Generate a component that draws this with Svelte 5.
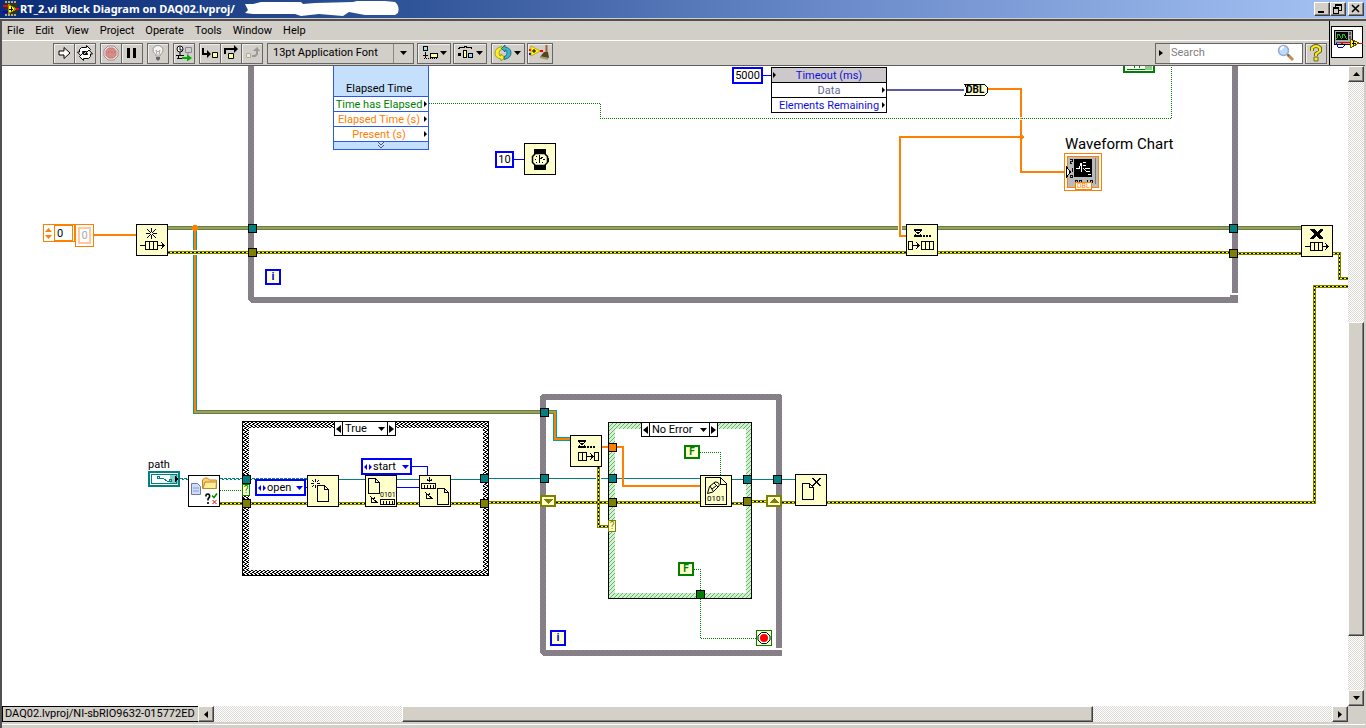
<script lang="ts">
  type Item = { x: number; y: number; kind: string };

  const menus = ['File', 'Edit', 'View', 'Project', 'Operate', 'Tools', 'Window', 'Help'];

  let search = $state('');
  let font = $state('13pt Application Font');
  let fileOperation = $state('open');
  let seekFrom = $state('start');
  let pathCase = $state('True');
  let errorCase = $state('No Error');

  // wires on the diagram
  const queueWires = [
    'M168 228H1301',
    'M195 228V412H544H555V439H570'
  ];
  const orangeWires = [
    'M988 89H1021V172H1066',
    'M1021 137H900V236H906',
    'M94 235H136',
    'M602 447H623V486H700'
  ];
  const errorWires = [
    'M168 252.5H1233V253.5H1339.5V278.5H1350',
    'M220 503.5H484V502.5H544',
    'M556 502.5H700M732 503.5H747V501.5H766M782 502.5H1314.5V286.5H1350',
    'M598.5 467V526.5H608'
  ];
  const boolWires = [
    'M429 103.5H600.5V118.5H1171.5V66',
    'M220 490.5H243',
    'M700 452.5H720.5V475',
    'M694 569.5H700.5V638.5H757'
  ];

  const tunnels = [
    { x: 248, y: 224, color: '#008080' },
    { x: 248, y: 248, color: '#808000' },
    { x: 1229, y: 224, color: '#008080' },
    { x: 1229, y: 249, color: '#808000' },
    { x: 242, y: 475, color: '#008080' },
    { x: 242, y: 499, color: '#808000' },
    { x: 480, y: 474, color: '#008080' },
    { x: 480, y: 499, color: '#808000' },
    { x: 540, y: 408, color: '#008080' },
    { x: 540, y: 474, color: '#008080' },
    { x: 608, y: 443, color: '#ff8000' },
    { x: 608, y: 474, color: '#008080' },
    { x: 608, y: 498, color: '#808000' },
    { x: 743, y: 475, color: '#008080' },
    { x: 743, y: 497, color: '#808000' },
    { x: 773, y: 475, color: '#008080' },
    { x: 696, y: 590, color: '#008000' }
  ];

  const nodes: Item[] = [
    { x: 136, y: 224, kind: 'obtain' },
    { x: 906, y: 224, kind: 'enqueue' },
    { x: 1301, y: 225, kind: 'release' },
    { x: 570, y: 435, kind: 'dequeue' },
    { x: 524, y: 143, kind: 'wait' },
    { x: 188, y: 475, kind: 'check' },
    { x: 307, y: 475, kind: 'open' },
    { x: 365, y: 475, kind: 'size' },
    { x: 419, y: 475, kind: 'position' },
    { x: 700, y: 475, kind: 'write' },
    { x: 795, y: 474, kind: 'close' }
  ];

  const vScroll = { start: 39.5, size: 51.6 };
  const hScroll = { start: 16.8, size: 61.8 };

  function at(x: number, y: number) {
    return `left: ${x}px; top: ${y}px`;
  }
</script>

{#snippet caret()}
  <svg class="caret" viewBox="0 0 7 4" width="7" height="4"><path d="M0 0h7L3.5 4z" /></svg>
{/snippet}

{#snippet page(x: number, y: number)}
  <path d="M{x} {y}h7l4 4v12h-11zM{x + 7} {y}v4h4" fill="#ffc" stroke="#000" />
{/snippet}

<div class="window">
  <header class="titlebar">
    <svg class="app-icon" viewBox="0 0 16 16" width="16" height="16" shape-rendering="crispEdges">
      <path d="M2 1h12v14H2z" fill="#332" />
      <path d="M2 1h12M2 14h12" stroke="#aa9" stroke-width="2" stroke-dasharray="2 1" />
      <path d="M0 5h5M12 8h4" stroke="#f00" stroke-width="2" />
      <path d="M0 11h5" stroke="#00f" stroke-width="2" />
      <path d="M5 3v10l8-5z" fill="#ff0" stroke="#980" />
      <path d="M6 8h4M8 6v4" stroke="#000" />
    </svg>
    <h1>RT_2.vi Block Diagram on DAQ02.lvproj/</h1>
    <svg class="scribble" viewBox="0 0 155 16" width="155" height="16">
      <path d="M0 3L8 3 16 1 56 1 58 3 70 2 108 1 112 0 140 0 150 1Q155 5 153 12L150 14 120 14 104 11 98 15 74 13 56 15 50 13 8 13 0 12 3 9z" fill="#fff" />
    </svg>
    <div class="window-buttons">
      <button type="button" aria-label="Minimize"><svg viewBox="0 0 12 10" width="12" height="10"><path d="M2 8h6" stroke="#000" stroke-width="2" /></svg></button>
      <button type="button" aria-label="Restore"><svg viewBox="0 0 12 10" width="12" height="10" shape-rendering="crispEdges"><path d="M3 1h7M1 4h6" stroke="#000" stroke-width="2" /><path d="M3.5 2v2M9.5 1v5.5H7M1.5 4v5.500h5V4" fill="none" stroke="#000" /></svg></button>
      <button type="button" class="close" aria-label="Close"><svg viewBox="0 0 12 10" width="12" height="10"><path d="M2 1l7 7M9 1L2 8" stroke="#000" stroke-width="1.6" /></svg></button>
    </div>
  </header>

  <div class="frame">
    <div class="top">
      <div class="bars">
        <nav class="menubar">
          {#each menus as menu}
            <button type="button">{menu}</button>
          {/each}
        </nav>

        <div class="toolbar">
          <div class="group">
            <button type="button" aria-label="Run">
              <svg viewBox="0 0 16 16" width="16" height="16"><path d="M3 6h5V2.500l6 5.500-6 5.500V10H3z" fill="#fff" stroke="#000" /></svg>
            </button>
            <button type="button" aria-label="Run Continuously">
              <svg viewBox="0 0 16 16" width="16" height="16"><path d="M2.500 7V4.500l2-2h5V.5l4 4-4 4v-2h-4v1h2l-3.500 3.500L.5 7z" fill="#fff" stroke="#000" /><path d="M13.500 9v2.500l-2 2h-5v2l-4-4 4-4v2h4v-1h-2L12 5l3.500 4z" fill="#fff" stroke="#000" /></svg>
            </button>
          </div>
          <div class="group">
            <button type="button" aria-label="Abort Execution">
              <svg viewBox="0 0 16 16" width="16" height="16"><path d="M5 1h6l4 4v6l-4 4H5l-4-4V5z" fill="#eee" stroke="#a88" /><path d="M5.500 3h5L13 5.500v5L10.500 13h-5L3 10.500v-5z" fill="#d88c88" stroke="#b77" /><path d="M5 7h7" stroke="#c66" stroke-dasharray="2 1" /></svg>
            </button>
            <button type="button" aria-label="Pause">
              <svg viewBox="0 0 16 16" width="16" height="16" shape-rendering="crispEdges"><path d="M3 3h3v10H3zM9 3h3v10H9z" /></svg>
            </button>
          </div>
          <div class="group">
            <button type="button" aria-label="Highlight Execution">
              <svg viewBox="0 0 16 16" width="16" height="16"><path d="M6 11C6 9 3 8 3 5a5 4.500 0 0 1 10 0c0 3-3 4-3 6z" fill="#f4f4f0" stroke="#999" /><path d="M7 10L6 5l2 2 2-2-1 5" fill="none" stroke="#aaa" /><path d="M6 12h4v2L8 16l-2-2z" fill="#666" /></svg>
            </button>
          </div>
          <div class="group">
            <button type="button" aria-label="Retain Wire Values">
              <svg viewBox="0 0 16 16" width="16" height="16"><circle cx="4" cy="4" r="3" fill="#fff" stroke="#000" /><path d="M4 2v3h2M4 7v3M0 10.500h8M1 13.500h5M2.500 11v2" fill="none" stroke="#000" /><path d="M9.500 2.500h6v5h-6z" fill="none" stroke="#889" /><path d="M12 8v3" stroke="#889" /><path d="M6 13h6" stroke="#0a0" stroke-width="2" /><path d="M11 9.500l5 3.500-5 3.500z" fill="#0a0" /></svg>
            </button>
          </div>
          <div class="group">
            <button type="button" aria-label="Step Into">
              <svg viewBox="0 0 16 16" width="16" height="16"><path d="M1 3v6h4" fill="none" stroke="#000" stroke-width="2" /><path d="M5 5l4 4-4 4z" /><path d="M10.500 7.500h5v5h-5z" fill="#ff9" stroke="#000" /></svg>
            </button>
            <button type="button" aria-label="Step Over">
              <svg viewBox="0 0 16 16" width="16" height="16"><path d="M2 9V4h10" fill="none" stroke="#000" stroke-width="2" /><path d="M11 0l4 4-4 4z" /><path d="M5.500 8.500h5v5h-5z" fill="#ff9" stroke="#000" /></svg>
            </button>
            <button type="button" aria-label="Step Out" disabled>
              <svg viewBox="0 0 16 16" width="16" height="16"><path d="M8 11h3l2-2V6" fill="none" stroke="#999" stroke-width="2" /><path d="M9 6l4-4 3 4z" fill="#999" /><path d="M2.500 8.500h4v4h-4z" fill="#eec" stroke="#aaa" /></svg>
            </button>
          </div>
          <label class="font-ring">
            <select bind:value={font} aria-label="Text Settings">
              <option>13pt Application Font</option>
            </select>
            <span>{@render caret()}</span>
          </label>
          <div class="group wide">
            <button type="button" aria-label="Align Objects">
              <svg viewBox="0 0 18 16" width="18" height="16" shape-rendering="crispEdges"><path d="M3.500 1.500h4v4h-4z" fill="#9df" stroke="#000" /><path d="M5.500 7v6M3 10.500h5" stroke="#000" /><path d="M10.500 8.500h7v4h-7z" fill="#ff9" stroke="#000" /><path d="M4 13.500h13" stroke="#000" stroke-dasharray="1 1" /></svg>
              {@render caret()}
            </button>
            <button type="button" aria-label="Distribute Objects">
              <svg viewBox="0 0 18 16" width="18" height="16" shape-rendering="crispEdges"><path d="M2 3.500h1v-1h5v-1h2v1h5v1h1" fill="none" stroke="#000" /><path d="M2 8h3v3H2z" /><path d="M7.500 5.500h3v7h-3z" fill="#ff9" stroke="#000" /><path d="M12.500 8.500h4v4h-4z" fill="#9df" stroke="#000" /></svg>
              {@render caret()}
            </button>
          </div>
          <div class="group wide">
            <button type="button" aria-label="Reorder">
              <svg viewBox="0 0 18 16" width="18" height="16"><path d="M8 1.500v3q-3 0-3 3.500t2 3V9l4 3.500-4 3.500v-2Q1 13 1 8t7-6.500z" fill="#fe2" stroke="#880" stroke-width=".7" /><path d="M10 14.500v-3q3 0 3-3.500t-2-3v2L7.500 3.500 11 0v2q6 1 6 6t-7 6.500z" fill="#3bc" stroke="#146" stroke-width=".7" /></svg>
              {@render caret()}
            </button>
            <button type="button" class="cleanup" aria-label="Clean Up Diagram">
              <svg viewBox="0 0 20 16" width="20" height="16"><path d="M0 5h2M11 6h3" stroke="#f00" stroke-width="2" /><path d="M0 9h2" stroke="#00f" stroke-width="2" /><path d="M2 1v10l9-5z" fill="#ff0" stroke="#cc8800" stroke-width=".7" /><path d="M3 6h4M5 4v4" stroke="#000" /><path d="M17.500 0v7" stroke="#963" stroke-width="2" /><path d="M15 7h4l1 6-9-1z" fill="#542" /><path d="M11 12l8 2" stroke="#a96" stroke-width="2" /></svg>
            </button>
          </div>
          <div class="search">
            <button type="button" aria-label="Search Options"><svg viewBox="0 0 4 6" width="4" height="6"><path d="M0 0l4 3-4 3z" /></svg></button>
            <input type="search" placeholder="Search" aria-label="Search" bind:value={search} />
            <svg viewBox="0 0 18 18" width="18" height="18"><path d="M11 11l5 5" stroke="#c84" stroke-width="3" /><path d="M9 9l3 3" stroke="#667" stroke-width="2" /><circle cx="6.500" cy="6.500" r="5" fill="#bdf" stroke="#9ac" stroke-width="1.500" /><path d="M4 6q0-3 3-3" stroke="#fff" stroke-width="2" fill="none" /></svg>
          </div>
          <button type="button" class="help" aria-label="Context Help"><svg viewBox="0 0 14 18" width="14" height="18"><path d="M3 7V4q4-4 8 0v3l-4 3v2" fill="none" stroke="#664" stroke-width="4" /><path d="M3 7V4q4-4 8 0v3l-4 3v2" fill="none" stroke="#fe0" stroke-width="2" /><path d="M5 13h4v4H5z" fill="#fe0" stroke="#664" /></svg></button>
        </div>
      </div>
      <div class="icon-pane">
        <svg viewBox="0 0 32 32" width="32" height="32" shape-rendering="crispEdges">
          <path d="M.5.500h31v31H.5z" fill="#fff" stroke="#000" />
          <path d="M3.500 4.500h18v14h-18z" fill="#aaa" stroke="#000" />
          <path d="M5 6h12v8H5z" />
          <path d="M5 12h1l1-4h1l2 4h1l1-4h1l2 4h1" fill="none" stroke="#0c0" />
          <path d="M18 6h1v2h-1zM18 10h1v2h-1zM5 16h12" stroke="#555" />
          <path d="M5 17l2 4 4 1 3-3" fill="none" stroke="#00c" />
          <path d="M10 18l3-2 6 0M27 17h5" fill="none" stroke="#e00" />
          <path d="M19 13v9l9-5z" fill="#ff0" stroke="#650" />
          <path d="M21 17.500h4M22.500 15v4" stroke="#000" />
        </svg>
      </div>
    </div>

    <div class="workspace">
      <main class="canvas">
        <div class="diagram">
          <svg class="wiring" width="1400" height="760" shape-rendering="crispEdges">
            <defs>
              <pattern id="loop" width="4" height="4" patternUnits="userSpaceOnUse"><path d="M0 0h4v4H0z" fill="#88808a" /><path d="M0 0h1v1H0zM2 2h1v1H2z" fill="#74847c" /><path d="M1 1h1v1H1zM3 3h1v1H3z" fill="#8c7480" /></pattern>
              <pattern id="case" width="4" height="4" patternUnits="userSpaceOnUse"><path d="M0 0h4v4H0z" fill="#fff" /><path d="M0 0h2v1H0zM2 1h2v1H2zM0 2h1v1H0zM3 2h1v1H3zM1 3h2v1H1z" fill="#000" /></pattern>
              <pattern id="no-error" width="4" height="4" patternUnits="userSpaceOnUse"><path d="M0 0h4v4H0z" fill="#c4fcc4" /><path d="M3 0h1v1H3zM2 1h1v1H2zM1 2h1v1H1zM0 3h1v1H0z" fill="#8c988c" /></pattern>
            </defs>

            <!-- loop and case borders -->
            <path d="M251 60V299.500H1234M1235 60V293" fill="none" stroke="url(#loop)" stroke-width="6" />
            <path d="M1230 295h8v8h-4v-1h-4z" fill="url(#loop)" />
            <path d="M248 300v3h3z" fill="#fff" />
            <path d="M542 394H780L782 396V648H776V400H546V650H782V656H543L540 653V396z" fill="url(#loop)" />
            <path d="M245.500 424.500H485.500V572.500H245.500z" fill="none" stroke="url(#case)" stroke-width="6" />
            <path d="M242.500 421.500H488.500V575.500H242.500z" fill="none" stroke="#000" />
            <path d="M611.500 425.500H748.500V595.500H611.500z" fill="none" stroke="url(#no-error)" stroke-width="6" />
            <path d="M608.500 422.500H751.500V598.500H608.500z" fill="none" stroke="#000" />

            {#each queueWires as d}
              <path {d} fill="none" stroke="#00a0a0" stroke-width="4" />
              <path {d} fill="none" stroke="#ff8000" stroke-width="2" />
            {/each}
            <path d="M193 225h4v1h1v4h-1v1h-4v-1h-1v-4h1z" fill="#ff8000" />
            <path d="M898 225h1v6h-1zM901 225h1v6h-1zM192 250h6v1h-6zM192 254h6v1h-6zM596 478h1v2h-1zM600 478h1v2h-1z" fill="#fff" />

            {#each boolWires as d}
              <path {d} fill="none" stroke="#008000" stroke-dasharray="1 1" />
            {/each}

            <path d="M180 478.500H307" fill="none" stroke="#008080" stroke-dasharray="3 1" />
            <path d="M182 479.500H307" fill="none" stroke="#008080" stroke-dasharray="2 2" />
            <path d="M339 479.500H480M484 478.500H596M601 478.500H700M732 479.500H795" fill="none" stroke="#008080" />
            <path d="M763 75.500H771M514 159.500H524M306 487.500H307M411 466.500H427.500V475M397 487.500H419" fill="none" stroke="#00f" />
            <path d="M887 90H964" stroke="#5a5a9c" stroke-width="2" />

            {#each errorWires as d}
              <path {d} fill="none" stroke="#808000" stroke-width="3" />
              <path {d} fill="none" stroke="#ff0" />
              <path {d} fill="none" stroke="#000" stroke-dasharray="2 2" />
            {/each}

            {#each orangeWires as d}
              <path {d} fill="none" stroke="#ff8000" stroke-width="2" />
            {/each}
            <path d="M1019 136h1v-1h3v1h1v2h-1v1h-3v-1h-1z" fill="#ff8000" />
            <path d="M1019 117h4v1h-4zM1019 119h4v1h-4z" fill="#fff" />

            {#each tunnels as t}
              <rect x={t.x + 0.5} y={t.y + 0.5} width="8" height="8" fill={t.color} stroke="#000" />
            {/each}

            <!-- shift registers -->
            <path d="M541 496h14v10h-14zM767 496h14v10h-14z" fill="#ffc" stroke="#808000" stroke-width="2" />
            <path d="M543 499h10l-5 5zM769 503h10l-5-5z" fill="#808000" />

            <!-- stop terminal -->
            <path d="M756.500 630.500h15v15h-15z" fill="#ffc" stroke="#008000" />
            <g shape-rendering="auto">
              <path d="M761.500 632.500h5l3.500 3.500v4l-3.500 3.500h-5L758 640v-4z" fill="#fff" stroke="#000" />
              <circle cx="764" cy="638" r="4" fill="#f00" />
            </g>

            <!-- clipped boolean terminal -->
            <path d="M1124 60h30v11.500h-30z" fill="#fff" stroke="#008000" stroke-width="2" />
            <path d="M1145 66h7v4h-7z" fill="#8c8" />
            <path d="M1134.500 66v2M1139.500 66v2M1127 69.500h18" fill="none" stroke="#008000" />

            <!-- path control terminal -->
            <path d="M149 472h30v14h-30z" fill="#fff" stroke="#008080" stroke-width="2" />
            <path d="M170 474h8v10h-8z" fill="#8cc" />
            <path d="M151.500 474.500h25v9h-25z" fill="none" stroke="#008080" />
            <path d="M157.500 476.500h2v2h-2zM160 478h3l4 3h3M169.500 479.500h2v2h-2z" fill="none" stroke="#008080" />
            <path d="M175 476l4 3-4 3z" />

            <!-- waveform chart terminal -->
            <path d="M1064.500 153.500h37v37h-37z" fill="#fff" stroke="#ff8000" />
            <path d="M1067.500 156.500h31v31h-31z" fill="#bbb" stroke="#ff8000" />
            <path d="M1074 159h18v18h-18z" />
            <path d="M1095.500 158v26" stroke="#777" />
            <path d="M1076 168.500h3l2-5M1081.500 163v9M1083 168l4 4M1083 162.500h3M1083 165.500h3M1085 168.500h5M1087 171.500h3M1088 174.500h3" fill="none" stroke="#fff" />
            <path d="M1070 159h2v2h-2v2h2M1072 168v4M1070.500 175.500h2v2h-2zM1075.500 180.500h2v2h-2zM1079.500 180.500h2v2h-2zM1087.500 180v3M1090.500 180.500h2v2h-2z" fill="none" stroke="#111" />
            <path d="M1066.500 167v10l4-5z" fill="#fff" stroke="#000" />

            {#each nodes as node}
              <svg x={node.x} y={node.y} width="32" height="32" viewBox="0 0 32 32">
                <path d="M.5.500h31v31H.5z" fill={node.kind === 'check' ? '#fff' : '#ffc'} stroke="#000" />
                {#if node.kind === 'obtain'}
                  <path d="M15.500 4v4M15.500 11v4M10 9.500h4M17 9.500h4" stroke="#000" />
                  <path d="M11 5h1v1h1v1h1v1h1v1h-1V8h-1V7h-1V6h-1zM20 5h-1v1h-1v1h-1v1h-1v1h1V8h1V7h1V6h1zM11 14h1v-1h1v-1h1v-1h1v-1h-1v1h-1v1h-1v1h-1zM20 14h-1v-1h-1v-1h-1v-1h-1v-1h1v1h1v1h1v1h1z" />
                  <path d="M4 21.500h5M9.500 17.500h12v8h-12zM13.500 17v8M17.500 17v8M22 21.500h6M25 18l3 3.500-3 3.500" fill="none" stroke="#000" />
                {:else if node.kind === 'enqueue' || node.kind === 'dequeue'}
                  <path d="M8 5h8v2H8zM8 11h8v2H8zM9 7h1v1H9zM14 7h1v1h-1zM10 8h4v1h-4zM11 9h2v1h-2zM9 10h1v1H9zM14 10h1v1h-1zM17 11h2v2h-2zM20 11h2v2h-2zM23 11h2v2h-2z" />
                  {#if node.kind === 'enqueue'}
                    <path d="M2.500 17.500h4v8h-4zM7 21.500h6M10 18l3 3.500-3 3.500M15.500 17.500h12v8h-12zM19.500 17v8M23.500 17v8" fill="none" stroke="#000" />
                  {:else}
                    <path d="M8.500 17.500h8v8h-8zM12.500 17v8M17 21.500h5M20 18l3 3.500-3 3.500M24.500 17.500h4v8h-4z" fill="none" stroke="#000" />
                  {/if}
                {:else if node.kind === 'release'}
                  <path d="M9 4h4l3 3 3-3h3v1l-4 4 4 4v1h-4l-3-3-3 3H9v-1l4-4-4-4z" />
                  <path d="M4 21.500h5M9.500 17.500h12v8h-12zM13.500 17v8M17.500 17v8M22 21.500h6M24 18l3 3.500-3 3.500" fill="none" stroke="#000" />
                {:else if node.kind === 'wait'}
                  <path d="M10 6h12v5H10zM10 22h12v5H10zM24 15h1v4h-1z" />
                  <path d="M11.500 10.500h9l3 3v6l-3 3h-9l-3-3v-6z" fill="#ffc" stroke="#000" stroke-width="1.500" shape-rendering="auto" />
                  <path d="M15.500 12v8M15 17l4-3M11 16.500h1M19 16.500h2M12 13.500h1M18 19.500h1M12 19.500h1" stroke="#000" />
                {:else if node.kind === 'check'}
                  <g shape-rendering="auto">
                    <path d="M3.500 8.500h6l3 3v8h-9z" fill="#cdf" stroke="#779" /><path d="M5 13h6M5 16h6" stroke="#89c" />
                    <path d="M14.500 13.500V5l2-2h3l2 2h7v8.500z" fill="#fc6" stroke="#b83" /><path d="M17 7h11.500L28 13.500H15z" fill="#fe9" stroke="#b83" />
                    <path d="M18 21.500V20q2-2 3.500 0v2L20 24v1.500M20 27v2" fill="none" stroke="#000" stroke-width="1.600" />
                    <path d="M24 20.500l2 2 3-4" fill="none" stroke="#080" stroke-width="1.500" /><path d="M24.500 25l4 4M28.500 25l-4 4" stroke="#e00" />
                  </g>
                {:else if node.kind === 'open'}
                  <path d="M8.500 4v3M8.500 10v3M4 8.500h3M10 8.500h3" stroke="#000" />
                  <path d="M5 5h1v1h1v1H6V6H5zM12 5h-1v1h-1v1h1V6h1zM5 12h1v-1h1v-1H6v1H5z" />
                  {@render page(10.5, 10.5)}
                {:else if node.kind === 'size'}
                  <path d="M3.500 3.500h7l4 4v11h-11zM10.500 3v4h4" fill="none" stroke="#000" />
                  <path d="M5 21l7 6.500H6.500v-6M10 22l-2 3M15.500 24.500h14v5h-14zM18.500 26v3M21.500 26v3M24.500 26v3M27.500 26v3" fill="none" stroke="#000" />
                {:else if node.kind === 'position'}
                  <path d="M10.500 2v4M8 4.500l2.500 2 2.500-2M2.500 8.500h14v5h-14zM5.500 10v3M8.500 10v3M11.500 10v3M14.500 10v3M6 17l7 6.500H7.500v-6M11 18l-2 3" fill="none" stroke="#000" />
                  {@render page(18.5, 13.500)}
                {:else if node.kind === 'write'}
                  <path d="M5.500 2.500h15l6 6v21h-21zM20.500 3v6h6" fill="#ffc" stroke="#000" />
                  <path d="M7.500 18.500l2-7L15 7q5 0 4 4l-6 6zM10 11l3 5M14 8l4 4M12 14l4-3" fill="none" stroke="#000" shape-rendering="auto" />
                {:else}
                  {@render page(7.500, 9.500)}
                  <path d="M18 4.500l7 7M25 4.500l-7 7M17 4.500h2M24 4.500h2M17 11.500h2M24 11.500h2" stroke="#000" />
                {/if}
              </svg>
            {/each}

            <path d="M964.500 84.500h20l3 3v5l-3 3h-20l2-3v-5z" fill="#ffc" stroke="#000" />
          </svg>

          <section class="express" style={at(333, 60)}>
            <h2>Elapsed Time</h2>
            <p class="green">Time has Elapsed</p>
            <p class="orange">Elapsed Time (s)</p>
            <p class="orange">Present (s)</p>
            <svg viewBox="0 0 95 8" width="95" height="8"><path d="M44 0l3 3 3-3M44 3l3 3 3-3" fill="none" stroke="#557" /></svg>
          </section>

          <section class="properties" style={at(771, 67)}>
            <p class="timeout">Timeout (ms)</p>
            <p class="data">Data</p>
            <p class="elements">Elements Remaining</p>
          </section>

          <input class="constant long" style={at(732, 67)} value="5000" aria-label="Timeout constant" />
          <input class="constant" style={at(495, 151)} value="10" aria-label="Wait constant" />
          <span class="tiny bold" style={at(966, 84)}>DBL</span>
          <span class="tiny chart-type" style={at(1075, 182)}>DBL</span>
          <span class="chart-label" style={at(1065, 134)}>Waveform Chart</span>
          <span class="label" style={at(148, 458)}>path</span>

          <div class="array" style={at(43, 224)}>
            <svg viewBox="0 0 7 13" width="7" height="13"><path d="M0 5L3.500 1 7 5zM0 8h7l-3.500 4z" fill="#ff8000" /></svg>
            <input value="0" aria-label="Array element" />
          </div>
          <span class="element" style={at(75, 224)}><i>0</i></span>

          <span class="iteration" style={at(265, 269)}>i</span>
          <span class="iteration" style={at(550, 630)}>i</span>
          <button type="button" class="bool" style={at(684, 445)}>F</button>
          <button type="button" class="bool" style={at(678, 562)}>F</button>
          <span class="selector-terminal" style={at(242, 484)}>?</span>
          <span class="selector-terminal olive" style={at(608, 520)}>?</span>
          <span class="tiny small" style={at(380, 489)}>0101</span>
          <span class="tiny" style={at(707, 493)}>0101</span>

          <label class="enum" style={at(255, 479)}>
            <svg viewBox="0 0 8 6" width="8" height="6"><path d="M3 0v6L0 3zM5 0v6l3-3z" fill="#00f" /></svg>
            <select bind:value={fileOperation} aria-label="File operation"><option>open</option></select>
            {@render caret()}
          </label>
          <label class="enum" style={at(361, 458)}>
            <svg viewBox="0 0 8 6" width="8" height="6"><path d="M3 0v6L0 3zM5 0v6l3-3z" fill="#00f" /></svg>
            <select bind:value={seekFrom} aria-label="Seek from"><option>start</option></select>
            {@render caret()}
          </label>

          <div class="case-selector" style={at(334, 421)}>
            <button type="button" aria-label="Previous case"><svg viewBox="0 0 5 8" width="5" height="8"><path d="M5 0v8L0 4z" /></svg></button>
            <label><select bind:value={pathCase} aria-label="Case"><option>True</option><option>False</option></select>{@render caret()}</label>
            <button type="button" aria-label="Next case"><svg viewBox="0 0 5 8" width="5" height="8"><path d="M0 0v8l5-4z" /></svg></button>
          </div>
          <div class="case-selector wider" style={at(641, 422)}>
            <button type="button" aria-label="Previous case"><svg viewBox="0 0 5 8" width="5" height="8"><path d="M5 0v8L0 4z" /></svg></button>
            <label><select bind:value={errorCase} aria-label="Case"><option>No Error</option><option>Error</option></select>{@render caret()}</label>
            <button type="button" aria-label="Next case"><svg viewBox="0 0 5 8" width="5" height="8"><path d="M0 0v8l5-4z" /></svg></button>
          </div>
        </div>
      </main>
      <div class="scrollbar vertical">
        <button type="button" aria-label="Scroll up"><svg viewBox="0 0 7 4" width="7" height="4"><path d="M0 4h7L3.500 0z" /></svg></button>
        <div class="track"><div class="thumb" style="top: {vScroll.start}%; height: {vScroll.size}%"></div></div>
        <button type="button" aria-label="Scroll down">{@render caret()}</button>
      </div>
    </div>

    <footer class="statusbar">
      <span class="target">DAQ02.lvproj/NI-sbRIO9632-015772ED</span>
      <div class="scrollbar horizontal">
        <button type="button" aria-label="Scroll left"><svg viewBox="0 0 4 7" width="4" height="7"><path d="M4 0v7L0 3.500z" /></svg></button>
        <div class="track"><div class="thumb" style="left: {hScroll.start}%; width: {hScroll.size}%"></div></div>
        <button type="button" aria-label="Scroll right"><svg viewBox="0 0 4 7" width="4" height="7"><path d="M0 0v7l4-3.500z" /></svg></button>
      </div>
      <div class="corner"></div>
    </footer>
  </div>
</div>

<style>
  :global(body) {
    overflow: hidden;
  }

  .window {
    display: flex;
    flex-direction: column;
    height: 100vh;
    background: #d2cec8;
    color: #000;
    font: 11px/14px Tahoma, Roboto, sans-serif;
    white-space: nowrap;
  }

  button,
  input,
  select {
    box-sizing: border-box;
    margin: 0;
    padding: 0;
    border: 0;
    border-radius: 0;
    outline: 0;
    background: none;
    color: inherit;
    font: inherit;
  }

  select {
    appearance: none;
    min-width: 0;
  }

  h1,
  h2,
  p {
    margin: 0;
    font-size: inherit;
  }

  svg {
    flex: none;
    display: block;
  }

  .titlebar {
    display: flex;
    align-items: center;
    flex: none;
    height: 18px;
    padding: 0 2px 0 3px;
    background: linear-gradient(90deg, #0a2c78, #305498 30%, #6888c8 60%, #a6c4f4);
    border-bottom: 1px solid #d2cec8;
    color: #fff;
  }

  .titlebar h1 {
    min-width: 225px;
    margin-left: 1px;
    font-family: Tahoma, 'Noto Sans', sans-serif;
    font-weight: bold;
  }

  .window-buttons {
    display: flex;
    margin-left: auto;
  }

  .window-buttons button,
  .scrollbar button,
  .thumb {
    display: flex;
    align-items: center;
    justify-content: center;
    box-sizing: border-box;
    background: #d4d0c8;
    border: 1px solid #fff;
    border-right-color: #404040;
    border-bottom-color: #404040;
    box-shadow: inset -1px -1px #808080;
  }

  .window-buttons button {
    width: 16px;
    height: 14px;
  }

  .window-buttons .close {
    margin-left: 2px;
  }

  .frame {
    display: flex;
    flex: 1;
    flex-direction: column;
    min-height: 0;
    padding-right: 1px;
    border: solid #505050;
    border-width: 2px 0 0 2px;
  }

  .top {
    display: flex;
    height: 44px;
    border-bottom: 1px solid #605c60;
  }

  .bars {
    flex: 1;
    min-width: 0;
  }

  .menubar {
    display: flex;
    align-items: center;
    gap: 11px;
    height: 19px;
    padding-left: 5px;
    border-bottom: 1px solid #fff;
  }

  .toolbar {
    display: flex;
    align-items: center;
    height: 24px;
    padding: 0 2px 0 51px;
  }

  .group {
    display: flex;
    margin-right: 4px;
  }

  .group button,
  .help {
    display: flex;
    align-items: center;
    justify-content: center;
    width: 22px;
    height: 21px;
    border: 1px solid #666;
    box-shadow: inset 1px 1px #eee;
  }

  .group button + button {
    margin-left: -1px;
  }

  .group.wide button {
    gap: 2px;
    width: 34px;
    padding-right: 2px;
  }

  .group.wide button + button {
    margin-left: 2px;
  }

  .group.wide .cleanup {
    width: 26px;
  }

  .font-ring {
    display: flex;
    box-sizing: border-box;
    width: 147px;
    height: 21px;
    margin-right: 3px;
    border: 1px solid #666;
  }

  .font-ring select {
    flex: 1;
    padding-left: 5px;
  }

  .font-ring span {
    display: flex;
    align-items: center;
    justify-content: center;
    width: 19px;
    border-left: 1px solid #888;
  }

  .search {
    display: flex;
    align-items: center;
    box-sizing: border-box;
    width: 148px;
    height: 21px;
    margin: 0 2px 0 auto;
    padding-right: 7px;
    background: #fff;
    border: 1px solid #666;
  }

  .search button {
    display: flex;
    align-items: center;
    width: 14px;
    height: 19px;
    padding-left: 3px;
    background: #d2cec8;
  }

  .search input {
    flex: 1;
    min-width: 0;
    appearance: none;
    padding-left: 1px;
  }

  .search input::placeholder {
    color: #808080;
    opacity: 1;
  }

  .icon-pane {
    width: 34px;
    padding-top: 5px;
    padding-left: 1px;
    border-left: 1px solid #000;
  }

  .workspace {
    display: flex;
    flex: 1;
    min-height: 0;
    padding-right: 1px;
  }

  .canvas {
    position: relative;
    flex: 1;
    min-width: 0;
    overflow: hidden;
    background: #fff;
  }

  .diagram {
    position: absolute;
    left: -2px;
    top: -66px;
    width: 1400px;
    height: 760px;
  }

  .diagram > * {
    position: absolute;
    box-sizing: border-box;
  }

  .wiring {
    left: 0;
    top: 0;
  }

  .express {
    width: 96px;
    height: 90px;
    background: #c4e0fc;
    border: 1px solid #2858f0;
    text-align: center;
  }

  .express h2 {
    padding: 21px 4px 0 0;
    height: 14px;
    font-weight: normal;
  }

  .express p,
  .properties p {
    position: relative;
    box-sizing: border-box;
    height: 15px;
    background: #fff;
    border-top: 1px solid #2858f0;
    line-height: 15px;
  }

  .express p {
    padding-right: 4px;
  }

  .express svg {
    border-top: 1px solid #2858f0;
  }

  .express p::after,
  .properties p::after {
    content: '';
    position: absolute;
    right: 1px;
    top: 4px;
    border: solid transparent;
    border-width: 3px 0 3px 3px;
    border-left-color: #000;
  }

  .green {
    color: #008000;
  }

  .orange {
    color: #ff8000;
  }

  .properties {
    width: 116px;
    height: 46px;
    border: solid #000;
    border-width: 0 1px 1px;
    text-align: center;
  }

  .properties p {
    border-color: #000;
    color: #1010e0;
  }

  .properties .timeout {
    background: #ccc8cc;
  }

  .properties .timeout::after {
    right: auto;
    left: 1px;
  }

  .properties .data {
    color: #686898;
  }

  .constant {
    width: 19px;
    height: 17px;
    background: #fff;
    border: 2px solid #00f;
    text-align: center;
  }

  .constant.long {
    width: 31px;
  }

  .tiny {
    font-size: 8px;
    line-height: 12px;
  }

  .small {
    font-size: 7px;
  }

  .bold {
    font-weight: bold;
    font-size: 10px;
  }

  .chart-type {
    height: 8px;
    padding: 0 1px;
    background: #fff;
    border: 1px solid #ff8000;
    color: #ff8000;
    font-size: 7px;
    line-height: 7px;
  }

  .chart-label {
    font-size: 15px;
    line-height: 20px;
  }

  .array {
    display: flex;
    align-items: center;
    gap: 2px;
    width: 32px;
    height: 18px;
    padding: 0 1px;
    border: 1px solid #ff8000;
  }

  .array input {
    flex: 1;
    min-width: 0;
    height: 16px;
    padding-left: 2px;
    border: 1px solid #ff8000;
    background: #fff;
  }

  .element {
    width: 19px;
    height: 23px;
    padding: 2px;
    background: #fff;
    border: 1px solid #ff8000;
    color: #aaa;
    text-align: center;
  }

  .element i {
    display: block;
    border: 2px solid #ffc8a0;
    font-style: normal;
    line-height: 13px;
  }

  .iteration,
  .bool {
    width: 16px;
    height: 16px;
    background: #ffc;
    border: 2px solid #00f;
    color: #00f;
    font-weight: bold;
    line-height: 12px;
    text-align: center;
  }

  .bool {
    height: 14px;
    border-color: #008000;
    color: #008000;
    font-size: 10px;
    line-height: 10px;
  }

  .selector-terminal {
    width: 8px;
    height: 12px;
    background: #ffc;
    border: 1px solid #008000;
    color: #008000;
    font-size: 10px;
    line-height: 10px;
    text-align: center;
  }

  .selector-terminal.olive {
    border-color: #808000;
    color: #808000;
  }

  .enum {
    display: flex;
    align-items: center;
    gap: 1px;
    width: 51px;
    height: 17px;
    padding: 0 1px;
    background: #fff;
    border: 2px solid #00f;
  }

  .enum select {
    flex: 1;
  }

  .enum .caret {
    fill: #00f;
  }

  .case-selector {
    display: flex;
    width: 62px;
    height: 15px;
    background: #fff;
    border: 1px solid #000;
  }

  .case-selector.wider {
    width: 77px;
  }

  .case-selector button {
    display: flex;
    align-items: center;
    justify-content: center;
    width: 7px;
  }

  .case-selector label {
    display: flex;
    align-items: center;
    flex: 1;
    min-width: 0;
    padding: 0 2px;
    border: solid #000;
    border-width: 0 1px;
  }

  .case-selector select {
    flex: 1;
  }

  .scrollbar {
    display: flex;
  }

  .scrollbar button {
    flex: none;
    width: 16px;
    height: 16px;
  }

  .track {
    position: relative;
    flex: 1;
    background: repeating-conic-gradient(#fff 0 25%, #dcd8d4 0 50%) 0 0 / 2px 2px;
  }

  .thumb {
    position: absolute;
  }

  .vertical {
    flex-direction: column;
    width: 16px;
  }

  .vertical .thumb {
    left: 0;
    width: 100%;
  }

  .horizontal {
    flex: 1;
  }

  .horizontal .thumb {
    top: 0;
    height: 100%;
  }

  .statusbar {
    display: flex;
    flex: none;
    height: 16px;
    padding-bottom: 2px;
    border-bottom: 1px solid #fff;
    margin-bottom: 3px;
  }

  .target {
    box-sizing: border-box;
    width: 196px;
    padding-left: 2px;
    border: solid #000;
    border-width: 1px 0 1px 1px;
    overflow: hidden;
  }

  .corner {
    width: 17px;
  }
</style>
